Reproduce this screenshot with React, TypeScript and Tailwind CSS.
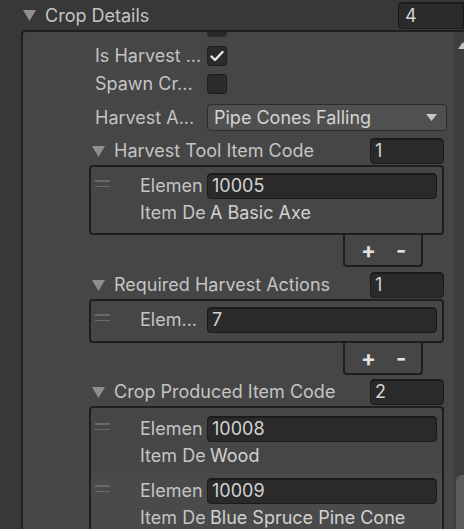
import React from 'react';

const Tri = ({ className = '' }: { className?: string }) => (
  <svg width="13" height="11" viewBox="0 0 13 11" className={className}>
    <polygon points="0,0 13,0 6.5,11" fill="#8f8f8f" />
  </svg>
);

const Field = ({ value, className = '' }: { value: string; className?: string }) => (
  <div
    className={`flex items-center rounded-[4px] border border-[#1b1b1b] bg-[#2a2a2a] pl-[4px] text-[#d2d2d2] shadow-[inset_0_1px_0_#1a1a1a] ${className}`}
  >
    {value}
  </div>
);

const Checkbox = ({ checked }: { checked?: boolean }) => (
  <div className="flex h-[20px] w-[20px] items-center justify-center rounded-[3px] border border-[#1f1f1f] bg-[#2b2b2b]">
    {checked && (
      <svg width="14" height="12" viewBox="0 0 14 12">
        <path d="M1.5 6.5 L5 10 L12.5 2" fill="none" stroke="#e6e6e6" strokeWidth="2.4" strokeLinecap="round" strokeLinejoin="round" />
      </svg>
    )}
  </div>
);

const Handle = () => (
  <div className="ml-[4px] flex w-[15px] shrink-0 flex-col gap-[4px] self-start pt-[7px]">
    <div className="h-[1.5px] bg-[#6a6a6a]" />
    <div className="h-[1.5px] bg-[#6a6a6a]" />
  </div>
);

const SubHeader = ({ title, count }: { title: string; count: string }) => (
  <div className="flex h-[26px] shrink-0 items-center">
    <Tri className="ml-[69px]" />
    <span className="ml-[9px]">{title}</span>
    <Field value={count} className="ml-auto mr-[10px] h-[26px] w-[74px]" />
  </div>
);

const Footer = () => (
  <div className="mr-[31px] flex h-[32px] w-[80px] shrink-0 items-center self-end rounded-b-[4px] border-2 border-t-0 border-[#1e1e1e] bg-[#464646] text-[22px] font-bold text-[#e2e2e2]">
    <span className="ml-[16px]">+</span>
    <span className="ml-[20px]">-</span>
  </div>
);

const Element = ({
  label,
  value,
  desc,
}: {
  label: string;
  value: string;
  desc?: string;
}) => (
  <div className="flex">
    <Handle />
    <div className="flex flex-1 flex-col">
      <div className="flex h-[26px] items-center">
        <span className="ml-[30px] w-[67px] shrink-0 whitespace-nowrap">{label}</span>
        <Field value={value} className="mr-[5px] h-[26px] flex-1" />
      </div>
      {desc !== undefined && (
        <div className="flex h-[28px] items-center">
          <span className="ml-[30px] w-[67px] shrink-0 whitespace-nowrap">Item De</span>
          <span className="ml-[3px] whitespace-nowrap text-[#d2d2d2]">{desc}</span>
        </div>
      )}
    </div>
  </div>
);

export default function App() {
  return (
    <div className="h-[529px] w-[464px] overflow-hidden bg-[#383838] font-['Inter',sans-serif] text-[18px] leading-none text-[#c4c4c4]">
      {/* header row */}
      <div className="flex h-[30px] items-center pt-[1px]">
        <Tri className="ml-[23px]" />
        <span className="ml-[9px]">Crop Details</span>
        <Field value="4" className="ml-auto h-[27px] w-[66px] rounded-r-none pl-[6px]" />
      </div>

      <div className="flex h-[499px] overflow-hidden">
        <div className="w-[21px] shrink-0" />
        <div className="flex flex-1 flex-col overflow-hidden rounded-tl-[4px] border-l-2 border-t-2 border-[#1f1f1f] bg-[#464646]">
          {/* cut-off field above */}
          <div className="ml-[184px] h-[5px] w-[20px] shrink-0 rounded-b-[4px] bg-[#2a2a2a]" />

          <div className="mt-[9px] flex h-[20px] shrink-0 items-center">
            <span className="ml-[72px] w-[112px]">Is Harvest ...</span>
            <Checkbox checked />
          </div>
          <div className="mt-[8px] flex h-[20px] shrink-0 items-center">
            <span className="ml-[72px] w-[112px]">Spawn Cr...</span>
            <Checkbox />
          </div>
          <div className="mt-[10px] flex h-[27px] shrink-0 items-center">
            <span className="ml-[72px] w-[112px]">Harvest A...</span>
            <div className="mr-[7px] flex h-[27px] flex-1 items-center rounded-[4px] border border-[#2c2c2c] bg-[#505050] pl-[6px] text-[#d4d4d4]">
              Pipe Cones Falling
              <svg width="11" height="7" viewBox="0 0 11 7" className="ml-auto mr-[9px]">
                <polygon points="0,0 11,0 5.5,7" fill="#c8c8c8" />
              </svg>
            </div>
          </div>

          <div className="mt-[7px] shrink-0">
            <SubHeader title="Harvest Tool Item Code" count="1" />
          </div>
          <div className="ml-[66px] mr-[10px] mt-[1px] shrink-0 rounded-[4px] border-2 border-[#1e1e1e] pb-[6px] pt-[6px]">
            <Element label="Elemen" value="10005" desc="A Basic Axe" />
          </div>
          <Footer />

          <div className="mt-[5px] shrink-0">
            <SubHeader title="Required Harvest Actions" count="1" />
          </div>
          <div className="ml-[66px] mr-[10px] mt-[1px] shrink-0 rounded-[4px] border-2 border-[#1e1e1e] pb-[8px] pt-[6px]">
            <Element label="Elem..." value="7" />
          </div>
          <Footer />

          <div className="mt-[4px] shrink-0">
            <SubHeader title="Crop Produced Item Code" count="2" />
          </div>
          <div className="ml-[66px] mr-[10px] mt-[1px] flex shrink-0 flex-col rounded-t-[4px] border-2 border-b-0 border-[#1e1e1e]">
            <div className="pb-[3px] pt-[8px]">
              <Element label="Elemen" value="10008" desc="Wood" />
            </div>
            <div className="bg-[#4a4a4a] pb-[8px] pt-[5px]">
              <Element label="Elemen" value="10009" desc="Blue Spruce Pine Cone" />
            </div>
          </div>
        </div>

        {/* scrollbar column */}
        <div className="relative w-[10px] shrink-0 border-t-2 border-[#1f1f1f] bg-[#3e3e3e]">
          <svg width="10" height="7" viewBox="0 0 10 7" className="absolute left-[4px] top-[10px]">
            <polygon points="5,0 10,7 0,7" fill="#c4c4c4" />
          </svg>
          <div className="absolute bottom-0 left-[2px] right-0 top-[443px] rounded-tl-[6px] bg-[#5c5c5c]" />
        </div>
      </div>
    </div>
  );
}
